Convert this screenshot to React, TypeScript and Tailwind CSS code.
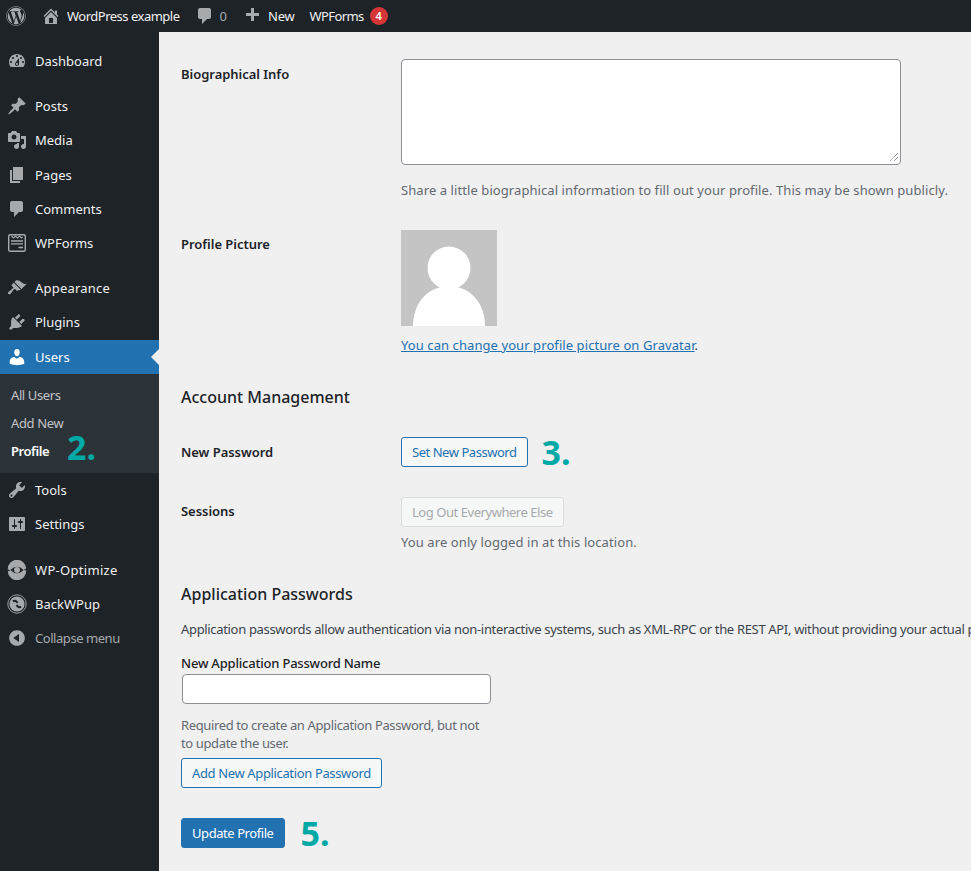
import { FaWordpress } from "react-icons/fa"

const FONT = "font-['Noto_Sans','Liberation_Sans',sans-serif]"

type IconProps = { d: string; className?: string }

function Dash({ d, className = "" }: IconProps) {
  return (
    <svg viewBox="0 0 20 20" className={`h-5 w-5 shrink-0 fill-current ${className}`}>
      <path d={d} />
    </svg>
  )
}

const icons = {
  home: "M16 8.5l1.53 1.53-1.06 1.06L10 4.62l-6.47 6.47-1.06-1.06L10 2.5l4 4v-2h2v4zm-6-2.46l6 5.99V18H4v-5.97zM12 17v-5H8v5h4z",
  comment: "M5 2h9c1.1 0 2 .9 2 2v7c0 1.1-.9 2-2 2h-2l-5 5v-5H5c-1.1 0-2-.9-2-2V4c0-1.1.9-2 2-2z",
  plus: "M17 7v3h-5v5H9v-5H4V7h5V2h3v5h5z",
  dashboard: "M3.76 16h12.48c1.1-1.37 1.76-3.11 1.76-5 0-4.42-3.58-8-8-8s-8 3.58-8 8c0 1.89.66 3.63 1.76 5zM10 4c.55 0 1 .45 1 1s-.45 1-1 1-1-.45-1-1 .45-1 1-1zM6 6c.55 0 1 .45 1 1s-.45 1-1 1-1-.45-1-1 .45-1 1-1zm8 0c.55 0 1 .45 1 1s-.45 1-1 1-1-.45-1-1 .45-1 1-1zm-5.37 5.55L12 7v6c0 1.1-.9 2-2 2s-2-.9-2-2c0-.57.24-1.08.63-1.45zM4 10c.55 0 1 .45 1 1s-.45 1-1 1-1-.45-1-1 .45-1 1-1zm12 0c.55 0 1 .45 1 1s-.45 1-1 1-1-.45-1-1 .45-1 1-1zm-5 3c0-.55-.45-1-1-1s-1 .45-1 1 .45 1 1 1 1-.45 1-1z",
  posts: "M10.44 3.02l1.82-1.82 6.36 6.35-1.83 1.82c-1.05-.68-2.48-.57-3.41.36l-.75.75c-.92.93-1.04 2.35-.35 3.41l-1.83 1.82-2.41-2.41-2.8 2.79c-.42.42-3.38 2.71-3.8 2.29s1.86-3.39 2.28-3.81l2.79-2.79L4.1 9.36l1.83-1.82c1.05.69 2.48.57 3.4-.36l.75-.75c.93-.92 1.05-2.35.36-3.41z",
  media: "M13 11V4c0-.55-.45-1-1-1h-1.67L9 1H5L3.67 3H2c-.55 0-1 .45-1 1v7c0 .55.45 1 1 1h10c.55 0 1-.45 1-1zM7 4.5c1.38 0 2.5 1.12 2.5 2.5S8.38 9.5 7 9.5 4.5 8.38 4.5 7 5.62 4.5 7 4.5zM14 6h5v10.5c0 1.38-1.12 2.5-2.5 2.5S14 17.88 14 16.5s1.12-2.5 2.5-2.5c.17 0 .34.02.5.05V9h-3V6zm-4 8.05V13h2v3.5c0 1.38-1.12 2.5-2.5 2.5S7 17.88 7 16.5 8.12 14 9.5 14c.17 0 .34.02.5.05z",
  pages: "M6 15V2h10v13H6zm-1 1h8v2H3V5h2v11z",
  appearance: "M14.48 11.06L7.41 3.99l1.5-1.5c.5-.56 2.3-.47 3.51.32 1.21.8 1.43 1.28 2.91 2.1 1.18.64 2.45 1.26 4.45.85zm-.71.71L6.7 4.7 4.93 6.47c-.39.39-.39 1.02 0 1.41l1.06 1.06c.39.39.39 1.03 0 1.42-.6.6-1.43 1.11-2.21 1.69-.35.26-.7.53-1.01.84C1.43 13.23.4 14.96 1.4 15.95c.96 1 2.71-.03 3.05-1.38.3-.32.58-.67.84-1.02.58-.78 1.09-1.61 1.69-2.21.39-.39 1.02-.39 1.41 0l1.06 1.06c.39.39 1.02.39 1.41 0z",
  plugins: "M13.11 4.36L9.87 7.6 8 5.73l3.24-3.24c.35-.34 1.05-.2 1.56.32.52.51.66 1.21.31 1.55zm-8 1.77l.91-1.12 9.01 9.01-1.19.84c-.71.71-2.63 1.16-3.82 1.16H6.14L4.9 17.26c-.59.59-1.54.59-2.12 0-.59-.58-.59-1.53 0-2.12l1.24-1.24v-3.88c0-1.13.4-3.19 1.09-3.89zm7.26 3.97l3.24-3.24c.34-.35 1.04-.21 1.55.31.52.51.66 1.21.31 1.55l-3.24 3.25z",
  users: "M10 9.25c-2.27 0-2.73-3.44-2.73-3.44C7 4.02 7.82 2 9.97 2c2.16 0 2.98 2.02 2.71 3.81 0 0-.41 3.44-2.68 3.44zm0 2.57L12.72 10c2.39 0 4.52 2.33 4.52 4.53v2.49s-3.65 1.13-7.24 1.13c-3.65 0-7.24-1.13-7.24-1.13v-2.49c0-2.25 1.94-4.48 4.47-4.48z",
  tools: "M16.68 9.77c-1.34 1.34-3.3 1.67-4.95.99l-5.41 6.52c-.99.99-2.59.99-3.58 0s-.99-2.59 0-3.57l6.52-5.42c-.68-1.65-.35-3.61.99-4.95 1.28-1.28 3.12-1.62 4.72-1.06l-2.89 2.89 2.82 2.82 2.86-2.87c.53 1.58.18 3.39-1.08 4.65zM3.81 16.21c.4.39 1.04.39 1.43 0 .4-.4.4-1.04 0-1.43-.39-.4-1.03-.4-1.43 0-.39.39-.39 1.03 0 1.43z",
  settings: "M18 16V4c0-.55-.45-1-1-1H3c-.55 0-1 .45-1 1v12c0 .55.45 1 1 1h14c.55 0 1-.45 1-1zM8 11h1c.55 0 1 .45 1 1s-.45 1-1 1H8v1.5c0 .28-.22.5-.5.5s-.5-.22-.5-.5V13H6c-.55 0-1-.45-1-1s.45-1 1-1h1V5.5c0-.28.22-.5.5-.5s.5.22.5.5V11zm5-2h-1c-.55 0-1-.45-1-1s.45-1 1-1h1V5.5c0-.28.22-.5.5-.5s.5.22.5.5V7h1c.55 0 1 .45 1 1s-.45 1-1 1h-1v5.5c0 .28-.22.5-.5.5s-.5-.22-.5-.5V9z",
  collapse: "M10 2.16c4.33 0 7.84 3.51 7.84 7.84s-3.51 7.84-7.84 7.84S2.16 14.33 2.16 10 5.71 2.16 10 2.16zm2 11.72V6.12L6.18 9.97z",
}

function WPFormsIcon() {
  return (
    <svg viewBox="0 0 20 20" className="h-5 w-5 shrink-0 text-[#a7aaad]">
      <rect x="1.700" y="1.700" width="16.600" height="16.600" rx="1.500" fill="none" stroke="currentColor" strokeWidth="1.400" />
      <path d="M4.500 3l2 2 2-2 2 2 2-2 2 2 1-1" fill="none" stroke="currentColor" strokeWidth="1.100" />
      <path d="M4 8h12M4 10.800h12" stroke="currentColor" strokeWidth="1.300" />
      <path d="M11.500 14.500H16" stroke="currentColor" strokeWidth="1.600" />
    </svg>
  )
}

function OptimizeIcon() {
  return (
    <svg viewBox="0 0 20 20" className="h-5 w-5 shrink-0 fill-[#a7aaad]">
      <path d="M.8 9.400A9.200 9.200 0 0 1 19.200 8.600L16.600 10Q10 3.300 3.400 10Z" />
      <path d="M19.200 10.600A9.200 9.200 0 0 1 .8 11.400L3.400 10Q10 16.700 16.600 10Z" />
      <circle cx="10" cy="10" r="3" />
    </svg>
  )
}

function BackWPupIcon() {
  return (
    <svg viewBox="0 0 20 20" className="h-5 w-5 shrink-0 text-[#a7aaad]">
      <circle cx="10" cy="10" r="9.200" fill="none" stroke="currentColor" strokeWidth="0.900" />
      <circle cx="10" cy="10" r="7.600" fill="currentColor" />
      <path d="M6 7.500Q8 5.500 10.500 8.800" fill="none" stroke="#1d2327" strokeWidth="2" />
      <path d="M14 12.500Q12 14.500 9.500 11.200" fill="none" stroke="#1d2327" strokeWidth="2" />
    </svg>
  )
}

function MenuItem({ icon, label, active = false, muted = false, gapBelow = false, track = "" }: { icon: React.ReactNode; label: string; active?: boolean; muted?: boolean; gapBelow?: boolean; track?: string }) {
  return (
    <div className={`relative flex h-[34px] items-center pl-[7px] ${gapBelow ? "mb-px" : ""} ${active ? "bg-[#2271b1] text-white" : muted ? "text-[#a7aaad]" : "text-[#f0f0f1]"}`}>
      {icon}
      <span className={`ml-2 ${track}`}>{label}</span>
      {active && (
        <span className="absolute right-0 top-1/2 -mt-2 h-0 w-0 border-y-[8px] border-r-[8px] border-y-transparent border-r-[#f0f0f1]" />
      )}
    </div>
  )
}

function Side({ name, label, gapBelow, track }: { name: keyof typeof icons; label: string; gapBelow?: boolean; track?: string }) {
  return <MenuItem label={label} gapBelow={gapBelow} track={track} icon={<Dash d={icons[name]} className="text-[#a7aaad]" />} />
}

function Step({ n }: { n: string }) {
  return <span className="flex h-[30px] items-center text-[34px] font-bold leading-none text-[#00a9a5]">{n}</span>
}

function OutlineButton({ children, track }: { children: React.ReactNode; track: string }) {
  return (
    <button className={`h-[30px] whitespace-nowrap rounded-[3px] border border-[#2271b1] bg-[#f6f7f7] px-[10px] text-[#2271b1] ${track}`}>
      {children}
    </button>
  )
}

function Label({ children, top }: { children: React.ReactNode; top: string }) {
  return <div className={`w-[220px] shrink-0 font-semibold tracking-[-0.03px] text-[#1d2327] ${top}`}>{children}</div>
}

export default function App() {
  return (
    <div className={`${FONT} h-[871px] w-[971px] overflow-hidden bg-[#f0f0f1] text-[13px] leading-[18px] text-[#3c434a]`}>
      {/* admin bar */}
      <header className="flex h-8 items-center bg-[#1d2327] text-[#f0f0f1]">
        <FaWordpress className="ml-[6px] h-5 w-5 shrink-0 text-[#a7aaad]" />
        <Dash d={icons.home} className="ml-[15px] text-[#a7aaad]" />
        <span className="ml-[6px] tracking-[-0.5px]">WordPress example</span>
        <Dash d={icons.comment} className="ml-[15px] text-[#a7aaad]" />
        <span className="ml-[5px] text-[#a7aaad]">0</span>
        <Dash d={icons.plus} className="ml-[15px] text-[#a7aaad]" />
        <span className="ml-[6px] tracking-[-0.2px]">New</span>
        <span className="ml-[15px] tracking-[-0.6px]">WPForms</span>
        <span className="ml-[6px] flex h-[18px] w-[18px] items-center justify-center rounded-full bg-[#d63638] text-[11px] font-semibold text-white">4</span>
      </header>

      <div className="flex h-[839px]">
        {/* sidebar */}
        <nav className="w-[159px] shrink-0 bg-[#1d2327] pt-3">
          <Side name="dashboard" label="Dashboard" />
          <div className="h-[11px]" />
          <Side name="posts" label="Posts" />
          <Side name="media" label="Media" gapBelow />
          <Side name="pages" label="Pages" />
          <Side name="comment" label="Comments" />
          <MenuItem label="WPForms" icon={<WPFormsIcon />} />
          <div className="h-[11px]" />
          <Side name="appearance" label="Appearance" track="tracking-[0.2px]" />
          <Side name="plugins" label="Plugins" gapBelow />
          <MenuItem active label="Users" icon={<Dash d={icons.users} className="text-white" />} />
          <div className="relative h-[99px] bg-[#2c3338] py-[7px] pl-[11px] text-[#c3c4c7]">
            <div className="flex h-7 items-center tracking-[-0.4px]">All Users</div>
            <div className="flex h-7 items-center tracking-[-0.35px]">Add New</div>
            <div className="flex h-7 items-center font-semibold tracking-[-0.45px] text-white">Profile</div>
            <div className="absolute left-[67px] top-[58px]"><Step n="2." /></div>
          </div>
          <Side name="tools" label="Tools" />
          <Side name="settings" label="Settings" />
          <div className="h-3" />
          <MenuItem label="WP-Optimize" track="tracking-[0.3px]" icon={<OptimizeIcon />} />
          <MenuItem label="BackWPup" icon={<BackWPupIcon />} />
          <MenuItem muted label="Collapse menu" track="tracking-[-0.45px]" icon={<Dash d={icons.collapse} className="text-[#a7aaad]" />} />
        </nav>

        {/* profile form */}
        <main className="min-w-0 flex-1 pl-[22px] pt-[27px]">
          <div className="flex">
            <Label top="pt-[6px]">Biographical Info</Label>
            <div>
              <div className="relative h-[106px] w-[500px] rounded border border-[#8c8f94] bg-white">
                <svg viewBox="0 0 10 10" className="absolute bottom-[2px] right-[1px] h-[10px] w-[10px] stroke-[#646970]">
                  <path d="M9 1L1 9M9 5L5 9" strokeDasharray="1 0.6" />
                </svg>
              </div>
              <p className="mt-4 whitespace-nowrap tracking-[0.08px] text-[#646970]">
                Share a little biographical information to fill out your profile. This may be shown publicly.
              </p>
            </div>
          </div>

          <div className="mt-[31px] flex">
            <Label top="pt-[5px]">Profile Picture</Label>
            <div>
              <svg viewBox="0 0 96 96" className="h-24 w-24 bg-[#c4c4c4]">
                <circle cx="48" cy="38" r="21.500" fill="#fff" />
                <path d="M12 96c0-24 16-40 36-40s36 16 36 40z" fill="#fff" />
              </svg>
              <p className="mt-[10px] tracking-[0.08px]">
                <a className="text-[#2271b1] underline">You can change your profile picture on Gravatar</a>.
              </p>
            </div>
          </div>

          <h2 className="mt-[31px] text-[16px] font-medium leading-6 text-[#1d2327]">Account Management</h2>

          <div className="mt-7 flex">
            <Label top="pt-[6px]">New Password</Label>
            <div className="flex items-center gap-[14px]">
              <OutlineButton track="tracking-[-0.46px]">Set New Password</OutlineButton>
              <Step n="3." />
            </div>
          </div>

          <div className="mt-[30px] flex">
            <Label top="pt-[5px]">Sessions</Label>
            <div>
              <button className="h-[30px] whitespace-nowrap rounded-[3px] border border-[#dcdcde] bg-[#f6f7f7] px-[10px] tracking-[-0.45px] text-[#a7aaad]">
                Log Out Everywhere Else
              </button>
              <p className="mt-[6px] tracking-[0.09px] text-[#646970]">You are only logged in at this location.</p>
            </div>
          </div>

          <h2 className="mt-[31px] text-[16px] font-medium leading-6 text-[#1d2327]">Application Passwords</h2>
          <p className="mt-[14px] whitespace-nowrap tracking-[-0.33px]">
            Application passwords allow authentication via non-interactive systems, such as XML-RPC or the REST API, without providing your actual password.
          </p>

          <div className="mt-4 font-medium tracking-[-0.2px] text-[#1d2327]">New Application Password Name</div>
          <div className="ml-px mt-[2px] h-[30px] w-[309px] rounded border border-[#8c8f94] bg-white" />
          <p className="mt-3 w-[310px] tracking-[-0.37px] text-[#646970]">
            Required to create an Application Password, but not to update the user.
          </p>
          <div className="mt-[6px]">
            <OutlineButton track="tracking-[-0.36px]">Add New Application Password</OutlineButton>
          </div>

          <div className="mt-[30px] flex items-center gap-4">
            <button className="h-[30px] rounded-[3px] border border-[#2271b1] bg-[#2271b1] px-[10px] tracking-[-0.43px] text-white">Update Profile</button>
            <Step n="5." />
          </div>
        </main>
      </div>
    </div>
  )
}
